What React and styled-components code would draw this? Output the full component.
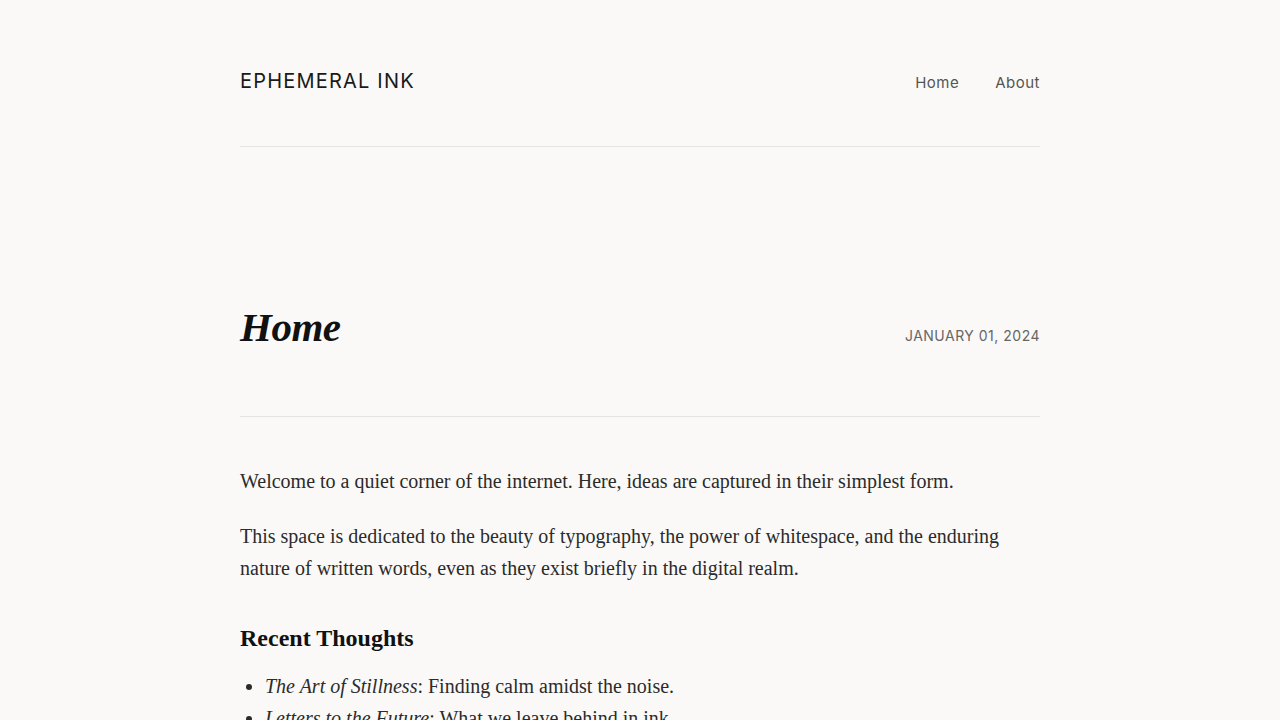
import React from "react";
import styled, { createGlobalStyle } from "styled-components";

const GlobalStyle = createGlobalStyle`
  html, body {
    margin: 0;
    padding: 0;
    background: #faf9f7;
  }
  body {
    font-family: "Liberation Serif", "Times New Roman", serif;
    color: #2b2b2b;
    -webkit-font-smoothing: antialiased;
  }
`;

const Wrapper = styled.div`
  max-width: 800px;
  margin: 0 auto;
`;

const Header = styled.header`
  display: flex;
  justify-content: space-between;
  align-items: baseline;
  padding: 66px 0 50px;
  border-bottom: 1px solid #e6e4e1;
`;

const Logo = styled.a`
  font-family: Inter, "Liberation Sans", sans-serif;
  font-size: 20px;
  line-height: 30px;
  letter-spacing: 1.2px;
  color: #1a1a1a;
  text-decoration: none;
`;

const Nav = styled.nav`
  display: flex;
  gap: 36px;
`;

const NavLink = styled.a`
  font-family: Inter, "Liberation Sans", sans-serif;
  font-size: 15px;
  letter-spacing: 0.5px;
  color: #555;
  text-decoration: none;
`;

const Article = styled.article`
  padding-top: 155px;
`;

const TitleRow = styled.div`
  display: flex;
  justify-content: space-between;
  align-items: baseline;
  padding-bottom: 64px;
  border-bottom: 1px solid #e6e4e1;
`;

const Title = styled.h1`
  margin: 0;
  font-size: 41px;
  line-height: 50px;
  font-style: italic;
  font-weight: 700;
  color: #111;
  letter-spacing: -0.5px;
`;

const Date = styled.time`
  font-family: Inter, "Liberation Sans", sans-serif;
  font-size: 14px;
  letter-spacing: 0.5px;
  text-transform: uppercase;
  color: #666;
`;

const Body = styled.div`
  padding-top: 48px;
  font-size: 20px;
  line-height: 32px;
  color: #2b2b2b;

  p {
    margin: 0 0 23px;
  }
`;

const Heading = styled.h2`
  margin: 38px 0 16px;
  font-size: 24px;
  line-height: 32px;
  font-weight: 700;
  color: #111;
`;

const List = styled.ul`
  margin: 0;
  padding-left: 25px;

  li em {
    font-style: italic;
  }
`;

const posts = [
  { title: "The Art of Stillness", note: "Finding calm amidst the noise." },
  { title: "Letters to the Future", note: "What we leave behind in ink." },
  { title: "On Margins", note: "Why empty space speaks loudly." },
];

export default function App() {
  return (
    <>
      <GlobalStyle />
      <Wrapper>
        <Header>
          <Logo href="#">EPHEMERAL INK</Logo>
          <Nav>
            <NavLink href="#">Home</NavLink>
            <NavLink href="#">About</NavLink>
          </Nav>
        </Header>
        <Article>
          <TitleRow>
            <Title>Home</Title>
            <Date>January 01, 2024</Date>
          </TitleRow>
          <Body>
            <p>
              Welcome to a quiet corner of the internet. Here, ideas are
              captured in their simplest form.
            </p>
            <p>
              This space is dedicated to the beauty of typography, the power of
              whitespace, and the enduring nature of written words, even as
              they exist briefly in the digital realm.
            </p>
            <Heading>Recent Thoughts</Heading>
            <List>
              {posts.map((p) => (
                <li key={p.title}>
                  <em>{p.title}</em>: {p.note}
                </li>
              ))}
            </List>
          </Body>
        </Article>
      </Wrapper>
    </>
  );
}
